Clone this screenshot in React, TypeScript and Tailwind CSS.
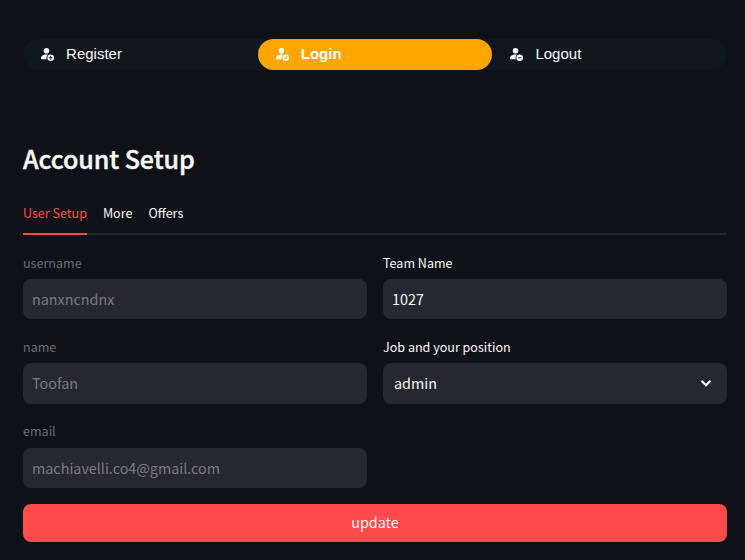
import { BsPersonFillAdd, BsPersonFillCheck, BsPersonFillDash } from "react-icons/bs";

const navItems = [
  { label: "Register", Icon: BsPersonFillAdd, active: false },
  { label: "Login", Icon: BsPersonFillCheck, active: true },
  { label: "Logout", Icon: BsPersonFillDash, active: false },
];

function Label({ text, muted = false }: { text: string; muted?: boolean }) {
  return (
    <div className={`h-[23.4px] text-[12.55px] leading-[13px] ${muted ? "text-[#6c6d70]" : "text-[#fafafa]"}`}>
      <span>{text}</span>
    </div>
  );
}

function Field({ label, value, muted = false }: { label: string; value: string; muted?: boolean }) {
  return (
    <div>
      <Label text={label} muted={muted} />
      <div
        className={`flex h-[40.4px] items-center rounded-lg bg-[#262730] px-[9px] pb-[0.4px] text-[14.35px] leading-5 ${
          muted ? "text-[#7b7c81]" : "text-[#fafafa]"
        }`}
      >
        <span>{value}</span>
      </div>
    </div>
  );
}

export default function App() {
  return (
    <main className="h-[560px] w-[745px] overflow-hidden bg-[#0e1117] pt-[39px] pr-[18px] pl-[23px] font-['Noto_Sans_CJK_SC',sans-serif] text-[#fafafa]">
      <nav className="grid h-[31px] grid-cols-3 rounded-2xl bg-[#0f161c] font-['Liberation_Sans',sans-serif]">
        {navItems.map(({ label, Icon, active }) => (
          <a
            key={label}
            className={`flex items-center rounded-2xl pb-px pl-4 text-[15px] leading-[22px] ${
              active ? "bg-[#ffa500] font-bold text-white" : "text-[#fafafa]"
            }`}
          >
            <Icon className="mr-[12.1px] mb-px size-[15px]" />
            <span>{label}</span>
          </a>
        ))}
      </nav>

      <h1 className="mt-[71px] h-[34px] text-[25.1px] leading-[34px] font-medium tracking-[-0.1px] [-webkit-text-stroke:0.4px_#fafafa]">
        Account Setup
      </h1>

      <div className="mt-[18px] flex h-[42px] items-stretch gap-4 border-b-2 border-[#262730] text-[12.55px] leading-[40px]">
        <div className="h-[42px] border-b-2 border-[#ff4b4b] text-[#ff4b4b]">User Setup</div>
        <div>More</div>
        <div>Offers</div>
      </div>

      <div className="mt-[20.6px] grid grid-cols-2 gap-x-4 gap-y-[20.6px]">
        <Field label="username" value="nanxncndnx" muted />
        <Field label="Team Name" value="1027" />
        <Field label="name" value="Toofan" muted />
        <div>
          <Label text="Job and your position" />
          <div className="flex h-[40.4px] items-center justify-between rounded-lg bg-[#262730] pr-3 pb-[0.4px] pl-[11px] text-[14.35px] leading-5">
            <span>admin</span>
            <svg className="mb-px size-[18px]" viewBox="0 0 18 18" fill="none" stroke="#fafafa" strokeWidth="2.1">
              <path d="m4.5 6.7 4.5 4.5 4.5-4.5" />
            </svg>
          </div>
        </div>
        <Field label="email" value="machiavelli.co4@gmail.com" muted />
      </div>

      <button className="mt-4 flex h-[38px] w-full items-center justify-center rounded-lg bg-[#ff4b4b] pb-0.5 text-[14.35px] leading-5 text-[#fafafa]">
        update
      </button>
    </main>
  );
}
